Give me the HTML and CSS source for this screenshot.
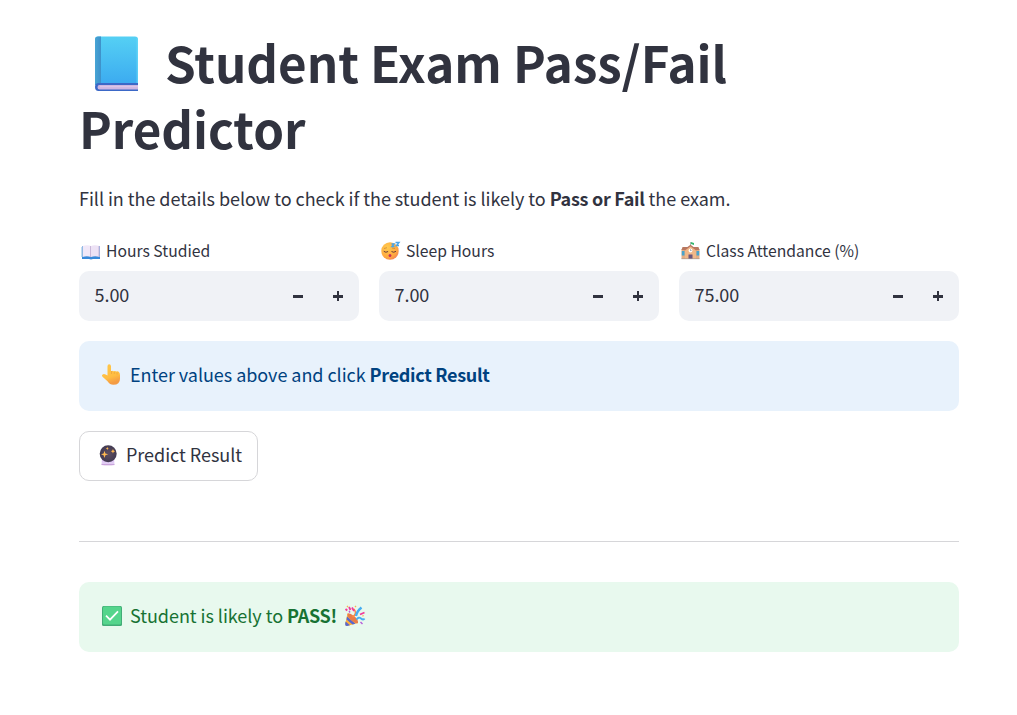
FILE: index.html
```html
<!DOCTYPE html>
<html lang="en">
<head>
<meta charset="utf-8">
<title>Student Exam Pass/Fail Predictor</title>
<link rel="stylesheet" href="styles.css">
</head>
<body>
<main class="page">
  <h1 class="title"><svg class="title-icon" viewBox="0 0 44 56"><defs><linearGradient id="cover" x1="0" y1="0" x2="0" y2="1"><stop offset="0" stop-color="#55d0f4"/><stop offset="1" stop-color="#3baaf0"/></linearGradient><linearGradient id="spine"><stop offset="0" stop-color="#48a5d5"/><stop offset="1" stop-color="#3e91ca"/></linearGradient></defs><path d="M3 .5h37a3 3 0 0 1 3 3V49H0V3.500a3 3 0 0 1 3-3z" fill="url(#cover)"/><path d="M3 .5h3V49H0V3.500a3 3 0 0 1 3-3z" fill="url(#spine)"/><path d="M41.500 1l1.500 2.500V47h-1.500z" fill="#6bdcf8" opacity=".6"/><path d="M43 47H3.500a3.500 4 0 0 0 0 8H43z" fill="#3b68c7"/><path d="M43 49H4.500a2 2.200 0 0 0 0 4.400H43z" fill="#cdb6e2"/><path d="M5 50.700h38" stroke="#dccaea"/></svg><span>Student Exam Pass/Fail Predictor</span></h1>
  <p class="intro">Fill in the details below to check if the student is likely to <strong>Pass or Fail</strong> the exam.</p>

  <div class="fields">
    <div class="field">
      <label class="label" for="hours"><svg class="icon" viewBox="0 0 20 20"><path d="M1 5h18v13H1z" fill="#408bd4"/><path d="M1 16h8l1 1 1-1h8v2h-7l-2 .5-2-.5H1z" fill="#3889da"/><path d="M1.500 5q5-1.500 8.500 0v11q-4-1.500-8.500 0z" fill="#f1e8f8"/><path d="M18.500 5q-5-1.500-8.500 0v11q4-1.500 8.500 0z" fill="#ede2f5"/><path d="M9.500 5v11M18 5v11" stroke="#c0abd1" stroke-width=".8"/><path d="M1 6v10" stroke="#8bbbe1"/></svg><span>Hours Studied</span></label>
      <div class="number"><input class="value" id="hours" type="text" value="5.00"><button class="step minus" aria-label="Decrease"></button><button class="step plus" aria-label="Increase"></button></div>
    </div>
    <div class="field">
      <label class="label" for="sleep"><svg class="icon" viewBox="0 0 20 20"><defs><radialGradient id="face" cx=".35" cy=".3" r=".8"><stop offset="0" stop-color="#ffcb4f"/><stop offset=".7" stop-color="#ffa83f"/><stop offset="1" stop-color="#f17c58"/></radialGradient></defs><circle cx="9" cy="10" r="8.700" fill="url(#face)"/><path d="M2.800 10.300q2 1.800 4.300.2M10.500 10.500q2.300 1.600 4.500-.2" stroke="#693a3b" fill="none" stroke-width="1"/><path d="M3 7.500l3-.8M11 7l3 .5" stroke="#bd7335" stroke-width=".6"/><ellipse cx="9" cy="14.500" rx="1.400" ry="1.600" fill="#c72e5d"/><path d="M14.500 1.500H18l-2.500 3H18M10.500 3h2.500l-2 2.500h2.500" fill="none" stroke="#4aa5e8" stroke-width="1.400"/></svg><span>Sleep Hours</span></label>
      <div class="number"><input class="value" id="sleep" type="text" value="7.00"><button class="step minus" aria-label="Decrease"></button><button class="step plus" aria-label="Increase"></button></div>
    </div>
    <div class="field">
      <label class="label" for="attendance"><svg class="icon" viewBox="0 0 20 20"><path d="M9.500 1v5" stroke="#8fa7a4" stroke-width=".8"/><path d="M10 1l3 1v2l-3-1z" fill="#36b76f"/><path d="M.5 8h18v10H.5z" fill="#e3ad84"/><path d="M1.500 6h16l1 3H.5z" fill="#b8785f"/><path d="M4 8.500l5.500-4 5.500 4V18H4z" fill="#f1b888"/><path d="M3.500 9l6-4.500 6 4.500" fill="none" stroke="#b97662" stroke-width="1.400"/><circle cx="9.500" cy="9.500" r="1.900" fill="#fff"/><path d="M9.500 8.300v1.200h1" stroke="#546582" stroke-width=".6" fill="none"/><path d="M.8 10h2.700v4.500H.8zM15.500 10h2.700v4.500h-2.700z" fill="#49a4cc"/><path d="M7.500 13.500h4V18h-4z" fill="#6b557d"/><path d="M.5 17.700h18" stroke="#a79a92" stroke-width=".7"/></svg><span>Class Attendance (%)</span></label>
      <div class="number"><input class="value" id="attendance" type="text" value="75.00"><button class="step minus" aria-label="Decrease"></button><button class="step plus" aria-label="Increase"></button></div>
    </div>
  </div>

  <div class="alert info"><svg class="icon large" viewBox="0 0 22 22"><defs><linearGradient id="hand" x1="0" y1="0" x2=".3" y2="1"><stop offset="0" stop-color="#ffc84a"/><stop offset=".7" stop-color="#ffbd42"/><stop offset="1" stop-color="#f49b43"/></linearGradient></defs><path d="M6.500 11.500V2.200q0-2 1.700-2t1.800 2v5q1-1 2.700.1 1.400-.8 2.700.3 1.500-.7 2.700.6.9.8.9 3v3.500q0 6-6.700 6-3.500 0-5.800-3.500L1.500 12.700Q.3 11.400 1.600 10.400t3 .1z" fill="url(#hand)"/><path d="M10.500 7V10M13.300 8V10M16 8.500v2" stroke="#eba33b" stroke-width=".7"/></svg><span>Enter values above and click <strong>Predict Result</strong></span></div>

  <button class="predict"><svg class="icon large" viewBox="0 0 22 22"><defs><radialGradient id="ball"><stop offset="0" stop-color="#605062"/><stop offset="1" stop-color="#423a51"/></radialGradient><linearGradient id="stand" x1="0" y1="0" x2="0" y2="1"><stop offset="0" stop-color="#d9baf3"/><stop offset=".7" stop-color="#e4d1f5"/><stop offset="1" stop-color="#b785ca"/></linearGradient></defs><path d="M5 15h12l.6 6q-6.500.5-13.200 0z" fill="url(#stand)"/><circle cx="11.200" cy="9.700" r="8.500" fill="url(#ball)"/><path d="M7.500 6.800l.9 2.700 2.700.8-2.700.9-.9 2.700-.9-2.700-2.600-.9 2.600-.8zM10.300 3l.5 1 .9.500-.9.5-.5 1-.5-1-.9-.5.9-.5zM16 5l.6 1.600 1.500.6-1.500.7-.6 1.600-.7-1.600-1.500-.7 1.500-.6z" fill="#ffb952"/></svg><span>Predict Result</span></button>

  <hr class="divider">

  <div class="alert success"><svg class="icon large" viewBox="0 0 22 22"><rect x="1" y="1" width="20" height="20" rx="1.500" fill="#42ad77"/><rect x="2" y="1.500" width="18" height="18" rx="1.500" fill="#55d58c"/><path d="M5 10.700l4 4 8-8.400" fill="none" stroke="#fff" stroke-width="1.700"/></svg><span class="result">Student is likely to <strong>PASS!</strong></span><svg class="icon large" viewBox="0 0 22 22"><path d="M3.500 8.500L14 18 3 21Q1 21 1.200 19z" fill="#ffb13c"/><path d="M3 11.500l8.500 7.200-3 .8-6-5zM1.500 16.500l4.500 3.700-3 .8q-2 .2-1.800-2z" fill="#5867cf"/><path d="M3.500 8.500q2-1 6.500 2.500t4 7q-2 1-6.500-2.500t-4-7z" fill="#e87c49"/><path d="M8.500 12q5-3 1.500-8" fill="none" stroke="#ff8a42" stroke-width="1.500"/><path d="M12 11q1-5 5.500-8.500" fill="none" stroke="#46aef1" stroke-width="2.400"/><path d="M12.500 14.500q2-3 4.500-1t3.500 0" fill="none" stroke="#46aef1" stroke-width="1.800"/><path d="M5 2l1.500 3M1.500 4l1.800 1.500M8 2.500l2 3.500M16 9.500l4.500-2" stroke="#f13b9a" stroke-width="1.800"/><path d="M3 1l1 1M18.500 10.500l1 .5M11 2l1-1" stroke="#f9b34b" stroke-width="1.400"/><path d="M5 6l1 1.500M16.500 17l2 2" stroke="#b85bd9" stroke-width="1.400"/></svg></div>
</main>
</body>
</html>
```
FILE: styles.css
```css
* { box-sizing: border-box; }

body {
  margin: 0;
  background: #fff;
  color: #31333f;
  font-family: "Noto Sans CJK SC", "Noto Sans", sans-serif;
  font-size: 18px;
  line-height: 32px;
}

strong {
  font-weight: 600;
  letter-spacing: -0.300px;
}

.page {
  display: flex;
  flex-direction: column;
  align-items: stretch;
  width: 880px;
  margin-left: 79px;
  padding-top: 29px;
}

.title {
  margin: 0;
  font-size: 49.300px;
  font-weight: 700;
  line-height: 66px;
  letter-spacing: -0.030px;
}

.title span { margin-left: -1px; }

.title-icon {
  width: 44px;
  height: 56px;
  margin: 0 27px 0 16px;
  vertical-align: -9px;
}

.intro {
  margin: 21px 0 27px;
  letter-spacing: -0.040px;
}

.fields {
  display: grid;
  grid-template-columns: repeat(3, minmax(0, 1fr));
  gap: 20px;
}

.label {
  display: flex;
  align-items: center;
  gap: 5px;
  height: 20px;
  margin-bottom: 10px;
  padding-left: 2px;
  font-size: 15.700px;
  line-height: 20px;
}

.icon {
  flex: none;
  width: 20px;
  height: 20px;
}

.large {
  width: 22px;
  height: 22px;
}

.number {
  display: flex;
  align-items: center;
  height: 50px;
  overflow: hidden;
  border-radius: 10px;
  background: #f0f2f6;
}

.value {
  flex: 1;
  min-width: 0;
  padding: 0 0 4px 15.500px;
  border: 0;
  background: transparent;
  color: inherit;
  font: inherit;
  letter-spacing: -0.050px;
}

.step {
  display: grid;
  place-items: center;
  width: 40px;
  height: 50px;
  padding: 0;
  border: 0;
  background: transparent;
}

.step:last-child { margin-right: 1px; }

.step::before,
.step::after {
  grid-area: 1 / 1;
  width: 10px;
  height: 2.500px;
  background: #31333f;
  content: "";
}

.step::before { height: 3px; }

.minus::after { display: none; }

.plus::after {
  width: 2.500px;
  height: 10px;
}

.alert {
  display: flex;
  align-items: center;
  height: 70px;
  gap: 7px;
  padding: 0 22px 2px;
  border-radius: 10px;
  letter-spacing: -0.040px;
}

.alert > span,
.predict > span { padding-bottom: 2px; }

.info {
  margin-top: 20px;
  background: #e8f2fc;
  color: #004280;
}

.predict {
  display: flex;
  align-items: center;
  align-self: flex-start;
  justify-content: center;
  gap: 7px;
  width: 179px;
  height: 50px;
  margin-top: 20px;
  padding: 0 0 2px 2px;
  border: 1px solid #d6d6d9;
  border-radius: 10px;
  background: #fff;
  color: inherit;
  font: inherit;
  letter-spacing: -0.040px;
}

.divider {
  width: 100%;
  height: 1px;
  margin: 60px 0 40px;
  border: 0;
  background: #d6d6d9;
}

.success {
  background: #e8f9ee;
  color: #177233;
}
```
